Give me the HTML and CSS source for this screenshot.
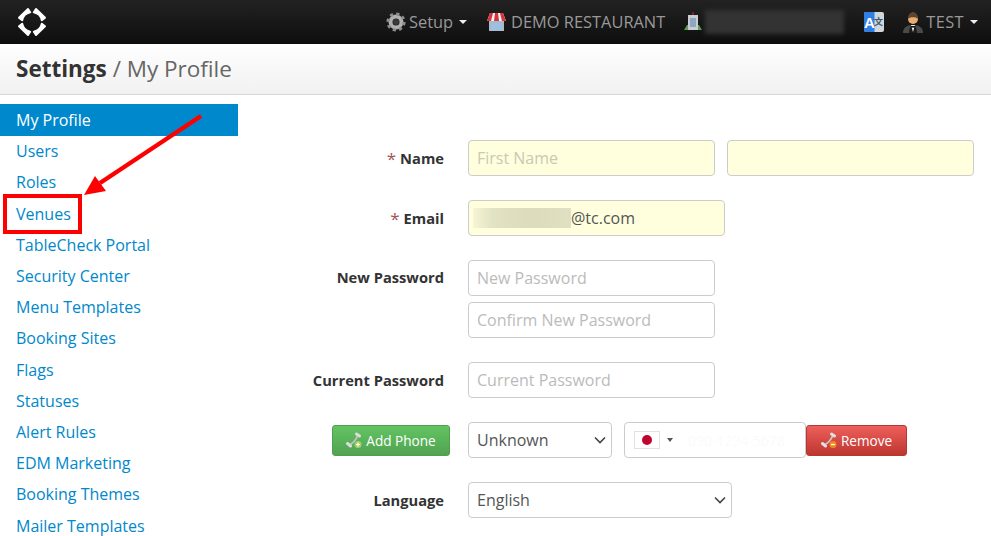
FILE: index.html
```html
<!DOCTYPE html>
<html lang="en">
<head>
<meta charset="utf-8">
<title>Settings / My Profile</title>
<link rel="stylesheet" href="styles.css">
</head>
<body>
<nav class="navbar">
  <svg class="logo" viewBox="0 0 30 30" width="30" height="30">
    <g fill="#fff" stroke="#fff" stroke-width="2" stroke-linejoin="round">
      <path d="M11 2 L13.200 5.200 A10 10 0 0 0 5.200 13.200 L2 10.800 Z"/>
      <path d="M19 2 L16.800 5.200 A10 10 0 0 1 24.800 13.200 L28 10.800 Z"/>
      <path d="M11 28 L13.200 24.800 A10 10 0 0 1 5.200 16.800 L2 19.200 Z"/>
      <path d="M19 28 L16.800 24.800 A10 10 0 0 0 24.800 16.800 L28 19.200 Z"/>
    </g>
  </svg>
  <div class="nav-items">
    <a class="nav-item">
      <svg class="nav-icon icon-gear" viewBox="0 0 20 20" width="20" height="20"><circle cx="10" cy="10" r="5.500" fill="none" stroke="#b0b0b0" stroke-width="4"/><circle cx="10" cy="10" r="8" fill="none" stroke="#8e8e8e" stroke-width="3.200" stroke-dasharray="3.100 3.180"/><circle cx="10" cy="10" r="3" fill="#3a3a3a"/></svg>
      <span class="nav-text">Setup</span><i class="caret"></i>
    </a>
    <a class="nav-item nav-venue">
      <svg class="nav-icon icon-store" viewBox="0 0 19 20" width="19" height="20"><rect x="2" y="8" width="15" height="11" fill="#aab8c8"/><rect x="4" y="11" width="11" height="7" fill="#9cc0e4"/><path d="M3 1h13l3 8H0z" fill="#f3f3f3"/><path d="M3 1h3L4 9H0zM8 1h3l1 8H7zM13 1h3l3 8h-4z" fill="#d8323c"/></svg>
      <span class="nav-text">DEMO RESTAURANT</span>
    </a>
    <a class="nav-item nav-building">
      <svg class="nav-icon icon-building" viewBox="0 0 18 20" width="18" height="20"><path d="M0 18l3-5h12l3 5z" fill="#5d9e56"/><rect x="4" y="3" width="10" height="15" fill="#c9cdd1"/><rect x="6" y="6" width="6" height="9" fill="#8ba7c2"/><rect x="8.500" y="0" width="1" height="3" fill="#c33"/></svg>
      <span class="blurred-name"></span>
    </a>
    <a class="nav-item nav-lang">
      <svg viewBox="0 0 20 20" width="20" height="20"><rect x="0" y="0" width="20" height="20" rx="2" fill="#cfd6dc"/><path d="M2 0h8.500v20H2a2 2 0 0 1-2-2V2a2 2 0 0 1 2-2z" fill="#2f7fe6"/><text class="lang-a" x="0" y="16">A</text><text class="lang-x" x="10" y="13">文</text></svg>
    </a>
    <a class="nav-item nav-user">
      <svg class="nav-icon icon-user" viewBox="0 0 20 21" width="20" height="21"><path d="M0 21c0-5 3-8 10-8s10 3 10 8z" fill="#4a4a4a"/><path d="M6 21c0-3 1-7 4-8 3 1 4 5 4 8z" fill="#1c1c1c"/><path d="M8 13l2 7 2-7z" fill="#f0f0f0"/><path d="M7.800 14h4.400v1.600H7.800z" fill="#111"/><circle cx="10" cy="7" r="5" fill="#e8ad6c"/><path d="M5 7C4.800 2 8 0 10 0s5.200 2 5 7C14 4.500 6 4.500 5 7z" fill="#5a4633"/></svg>
      <span class="nav-text nav-text-user">TEST</span><i class="caret"></i>
    </a>
  </div>
</nav>
<header class="page-head">
  <h1 class="page-title"><strong>Settings</strong> / My Profile</h1>
</header>
<div class="content">
  <ul class="side-menu">
    <li class="active"><a>My Profile</a></li>
    <li><a>Users</a></li>
    <li><a>Roles</a></li>
    <li><a>Venues</a></li>
    <li><a>TableCheck Portal</a></li>
    <li><a>Security Center</a></li>
    <li><a>Menu Templates</a></li>
    <li><a>Booking Sites</a></li>
    <li><a>Flags</a></li>
    <li><a>Statuses</a></li>
    <li><a>Alert Rules</a></li>
    <li><a>EDM Marketing</a></li>
    <li><a>Booking Themes</a></li>
    <li><a>Mailer Templates</a></li>
  </ul>
  <form class="profile-form">
    <div class="form-row">
      <label class="form-label"><span class="req">*</span> Name</label>
      <div class="fields">
        <input class="input input-req w247" placeholder="First Name">
        <input class="input input-req w247">
      </div>
    </div>
    <div class="form-row">
      <label class="form-label"><span class="req">*</span> Email</label>
      <div class="fields">
        <div class="input input-req w257 email-box"><span class="email-blur"></span><span>@tc.com</span></div>
      </div>
    </div>
    <div class="form-row">
      <label class="form-label">New Password</label>
      <div class="fields stack">
        <input class="input w247" placeholder="New Password">
        <input class="input w247" placeholder="Confirm New Password">
      </div>
    </div>
    <div class="form-row">
      <label class="form-label">Current Password</label>
      <div class="fields">
        <input class="input w247" placeholder="Current Password">
      </div>
    </div>
    <div class="form-row">
      <div class="form-label">
        <button type="button" class="btn btn-green">
          <svg viewBox="0 0 16 16" width="16" height="16"><path d="M3 13C7 11.500 10 8 12 3" fill="none" stroke="#c4c4c4" stroke-width="1.800"/><path d="M1.500 11.500l3 2.500M10.500 2l3 2" stroke="#dcdcdc" stroke-width="3" stroke-linecap="round"/><circle cx="12" cy="12.500" r="3.500" fill="#a4cf6a"/><path d="M10 12.500h4M12 10.500v4" stroke="#fff" stroke-width="1.200"/></svg>
          Add Phone
        </button>
      </div>
      <div class="fields">
        <select class="input select w144"><option>Unknown</option></select>
        <div class="phone">
          <span class="flag"><i class="flag-dot"></i></span>
          <i class="flag-caret"></i>
          <input class="phone-input" placeholder="090-1234-5678">
        </div>
        <button type="button" class="btn btn-red">
          <svg viewBox="0 0 16 16" width="16" height="16"><path d="M3 13C7 11.500 10 8 12 3" fill="none" stroke="#c9c9c9" stroke-width="1.800"/><path d="M1.500 11.500l3 2.500M10.500 2l3 2" stroke="#e0e0e0" stroke-width="3" stroke-linecap="round"/><circle cx="12" cy="12.500" r="3.500" fill="#f08a1d"/><path d="M10 12.500h4" stroke="#fff" stroke-width="1.200"/></svg>
          Remove
        </button>
      </div>
    </div>
    <div class="form-row">
      <label class="form-label">Language</label>
      <div class="fields">
        <select class="input select w264"><option>English</option></select>
      </div>
    </div>
  </form>
</div>
<div class="callout-box"></div>
<svg class="callout-arrow" viewBox="0 0 991 536" width="991" height="536">
  <path d="M201 116 L100 183" stroke="#f00" stroke-width="4.500" fill="none"/>
  <path d="M84 195 L95 176 L106 191 Z" fill="#f00"/>
</svg>
</body>
</html>
```
FILE: styles.css
```css
* { box-sizing: border-box; }
html, body { height: 100%; }
body {
  margin: 0;
  width: 991px;
  height: 536px;
  overflow: hidden;
  position: relative;
  background: #fff;
  color: #333;
  font-family: "Open Sans", "Liberation Sans", sans-serif;
  font-size: 16px;
}
.navbar {
  height: 44px;
  display: flex;
  align-items: center;
  justify-content: space-between;
  padding: 0 13px 0 16.5px;
  background: linear-gradient(#222, #0e0e0e);
}
.logo { display: block; margin-top: -1px; }
.nav-items { display: flex; align-items: center; }
.nav-item {
  display: flex;
  align-items: center;
  color: #999;
  font-size: 16.4px;
  white-space: nowrap;
}
.nav-text { padding-bottom: 2px; }
.nav-text-user { letter-spacing: 0.4px; }
.nav-icon { margin-right: 4px; }
.icon-gear { margin-right: 3px; }
.icon-store { margin-right: 5px; }
.icon-building { margin-right: 3px; }
.icon-user { margin-right: 3px; }
.nav-venue { margin-left: 20px; }
.nav-building { margin-left: 19px; }
.nav-lang { margin-left: 20px; }
.nav-user { margin-left: 19px; }
.caret {
  width: 0;
  height: 0;
  margin-left: 6px;
  border-left: 4px solid transparent;
  border-right: 4px solid transparent;
  border-top: 4px solid #eee;
}
.blurred-name {
  width: 139px;
  height: 24px;
  background: #333;
  filter: blur(2px);
}
.lang-a { font: 700 15px "Liberation Sans", sans-serif; fill: #fff; }
.lang-x { font: 700 9px "Noto Sans CJK SC", sans-serif; fill: #3c5a6a; }
.page-head {
  height: 51px;
  display: flex;
  align-items: center;
  padding: 0 0 2px 16px;
  background: linear-gradient(#fff, #f1f1f1);
  border-bottom: 1px solid #d8d8d8;
}
.page-title {
  margin: 0;
  font-size: 22.5px;
  font-weight: 400;
  color: #666;
}
.page-title strong { color: #333; font-weight: 700; }
.content { display: flex; align-items: flex-start; }
.side-menu {
  width: 238px;
  flex: none;
  list-style: none;
  margin: 9px 0 0;
  padding: 0;
}
.side-menu li {
  height: 31.2px;
  padding-left: 16px;
  line-height: 31.2px;
  color: #0088cc;
}
.side-menu li.active {
  height: 32px;
  margin-bottom: 0.28px;
  line-height: 32px;
  background: #0088cc;
  color: #fff;
}
.profile-form {
  flex: 1;
  padding-top: 45px;
  display: flex;
  flex-direction: column;
  gap: 24px;
}
.form-row {
  display: grid;
  grid-template-columns: 212px 1fr;
  column-gap: 18px;
  align-items: center;
}
.form-row:has(.stack) { align-items: start; }
.form-row:has(.stack) .form-label { margin-top: 7px; }
.form-label {
  display: flex;
  align-items: center;
  justify-content: flex-end;
  gap: 4px;
  padding-right: 6px;
  font-size: 14.7px;
  font-weight: 700;
  color: #333;
}
.form-row > .form-label:has(.btn) { padding-right: 0; }
.req { color: #a05555; font-weight: 400; font-size: 17px; line-height: 1; }
.fields { display: flex; align-items: center; gap: 12px; }
.fields.stack { flex-direction: column; align-items: flex-start; gap: 6px; }
.input {
  height: 36px;
  padding: 0 8px;
  border: 1px solid #ccc;
  border-radius: 4px;
  background: #fff;
  color: #555;
  font: inherit;
  outline: none;
}
.input::placeholder { color: #bbb; }
.select {
  appearance: none;
  padding-right: 24px;
  background-image: url("data:image/svg+xml,%3Csvg xmlns='http://www.w3.org/2000/svg' width='12' height='8'%3E%3Cpath d='M1 1.500l5 5 5-5' fill='none' stroke='%23444' stroke-width='1.600'/%3E%3C/svg%3E");
  background-repeat: no-repeat;
  background-position: right 5px center;
}
.input-req { background: #ffffdd; }
.input-req::placeholder { color: #c9c9b5; }
.w247 { width: 247px; }
.w257 { width: 257px; }
.w144 { width: 144px; }
.w264 { width: 264px; }
.email-box { display: flex; align-items: center; padding-left: 4px; }
.email-blur {
  width: 98px;
  height: 20px;
  background: linear-gradient(90deg, #f6f6d6, #e2e2c4 20%, #dcdcbc 60%, #e0e0c2);
}
.phone {
  width: 182px;
  height: 36px;
  display: flex;
  align-items: center;
  border: 1px solid #ccc;
  border-radius: 4px;
  padding-left: 9px;
  margin-right: -12px;
}
.flag {
  width: 26px;
  height: 18px;
  display: flex;
  align-items: center;
  justify-content: center;
  background: #fff;
  border: 1px solid #e2e2e2;
}
.flag-dot { width: 10px; height: 10px; border-radius: 50%; background: #c0052f; }
.flag-caret {
  width: 0;
  height: 0;
  margin-left: 7px;
  border-left: 3px solid transparent;
  border-right: 3px solid transparent;
  border-top: 4px solid #555;
}
.phone-input {
  flex: 1;
  min-width: 0;
  border: 0;
  background: transparent;
  padding: 0 4px 0 15px;
  font-family: inherit;
  font-size: 14px;
  outline: none;
}
.phone-input::placeholder { color: #fbfbfb; }
.btn {
  height: 31px;
  display: inline-flex;
  align-items: center;
  justify-content: center;
  gap: 4px;
  border-radius: 3px;
  color: #fff;
  font-family: inherit;
  font-size: 13.6px;
  font-weight: 400;
  cursor: pointer;
}
.btn-green {
  width: 118px;
  background: linear-gradient(#62c462, #51a351);
  border: 1px solid #4f9f4f;
}
.btn-red {
  width: 101px;
  background: linear-gradient(#ee5f5b, #bd362f);
  border: 1px solid #b33a34;
}
.callout-box {
  position: absolute;
  left: 3px;
  top: 194px;
  width: 79px;
  height: 40px;
  border: 4px solid #f00;
}
.callout-arrow {
  position: absolute;
  left: 0;
  top: 0;
  pointer-events: none;
}
```
